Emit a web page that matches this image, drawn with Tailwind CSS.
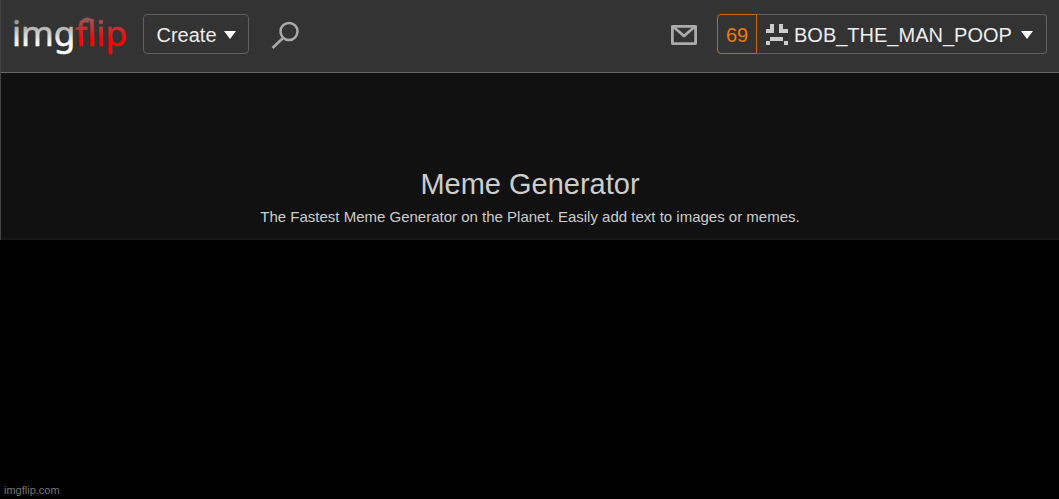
<!DOCTYPE html>
<html lang="en">
<head>
<meta charset="utf-8">
<title>Meme Generator - Imgflip</title>
<script src="https://cdn.jsdelivr.net/npm/@tailwindcss/browser@4"></script>
</head>
<body class="min-h-screen flex flex-col bg-black font-['Liberation_Sans',Arial,sans-serif] text-[#ccc]">
<div class="border-l border-[#444]">
<header class="flex items-start bg-[#333] h-[73px] border-b border-[#666] pl-3 pr-3 pt-[14px]">
  <a href="#" aria-label="imgflip" class="-mt-1 w-[118px] h-12"><svg class="block w-full h-full overflow-visible" viewBox="0 0 118 48" aria-hidden="true">
    <defs>
      <linearGradient id="w" gradientUnits="userSpaceOnUse" x1="0" y1="8" x2="0" y2="34"><stop offset="0" stop-color="#888"/><stop offset="1" stop-color="#fff"/></linearGradient>
      <linearGradient id="r" gradientUnits="userSpaceOnUse" x1="0" y1="6" x2="0" y2="29"><stop offset="0" stop-color="#856565"/><stop offset="1" stop-color="#f80404"/></linearGradient>
    </defs>
    <text x="-1" y="36" font-size="35" stroke-width="0.600" font-family="'Noto Sans','Open Sans',sans-serif"><tspan fill="url(#w)" stroke="url(#w)">img</tspan><tspan fill="url(#r)" stroke="url(#r)">flip</tspan></text>
    <path d="M71 9.500C75 8 78.500 9 78.500 13" fill="none" stroke="url(#r)" stroke-width="2.500"/>
  </svg></a>
  <button class="ml-3 h-10 w-[106px] shrink-0 flex items-center justify-center gap-[7px] rounded border border-[#606060] pt-[2px] text-xl text-[#eee]">Create<svg class="w-3 h-2" viewBox="0 0 12 8" fill="#fff" aria-hidden="true"><path d="M0 0h12L6 8z"/></svg></button>
  <button aria-label="Search" class="ml-[22px] mt-[6px] shrink-0"><svg class="w-7 h-8" viewBox="0 0 28 32" fill="none" stroke="#aaa" aria-hidden="true"><circle cx="18" cy="11.500" r="8.500" stroke-width="2.500"/><path d="M12 18L1.500 28" stroke-width="2.600"/></svg></button>
  <a href="#" aria-label="Messages" class="ml-auto mr-5 mt-[11px] shrink-0"><svg class="block w-[26px] h-5" viewBox="0 0 26 20" fill="none" stroke="#aaa" stroke-width="2.800" stroke-linejoin="round" aria-hidden="true"><rect x="1.400" y="1.400" width="23.200" height="17.200"/><path d="M2 1.500l11 9.500 11-9.500" stroke-width="2.800"/></svg></a>
  <div class="flex h-10 shrink-0 text-xl">
    <a href="#" class="w-10 flex items-center justify-center rounded-l border border-[#c9690f] pt-[2px] text-[#ee7a10]">69</a>
    <button class="w-[290px] flex items-center rounded-r border border-l-0 border-[#606060] pt-[2px] pl-[9px] text-[#eee]"><svg class="w-[22px] h-[22px] mr-[6px]" viewBox="0 0 22 22" fill="#ccc" shape-rendering="crispEdges" aria-hidden="true"><path d="M4 0h4v9H0V5h4zM13 0h4v5h5v4h-9zM4 13h13v4H4zM0 17h4v4H0zM18 17h4v4h-4z"/></svg>BOB_THE_MAN_POOP<svg class="w-3 h-2 ml-[9px]" viewBox="0 0 12 8" fill="#fff" aria-hidden="true"><path d="M0 0h12L6 8z"/></svg></button>
  </div>
</header>
<main class="bg-[#111] border-b-2 border-[#181818] text-center pt-[95px] pb-[13px]">
  <h1 class="text-[29px] leading-8">Meme Generator</h1>
  <p class="mt-[9px] text-[15px] leading-4">The Fastest Meme Generator on the Planet. Easily add text to images or memes.</p>
</main>
</div>
<footer class="mt-auto pl-1 pb-[3px] text-[11px] leading-3 text-[#777]">imgflip.com</footer>
</body>
</html>
